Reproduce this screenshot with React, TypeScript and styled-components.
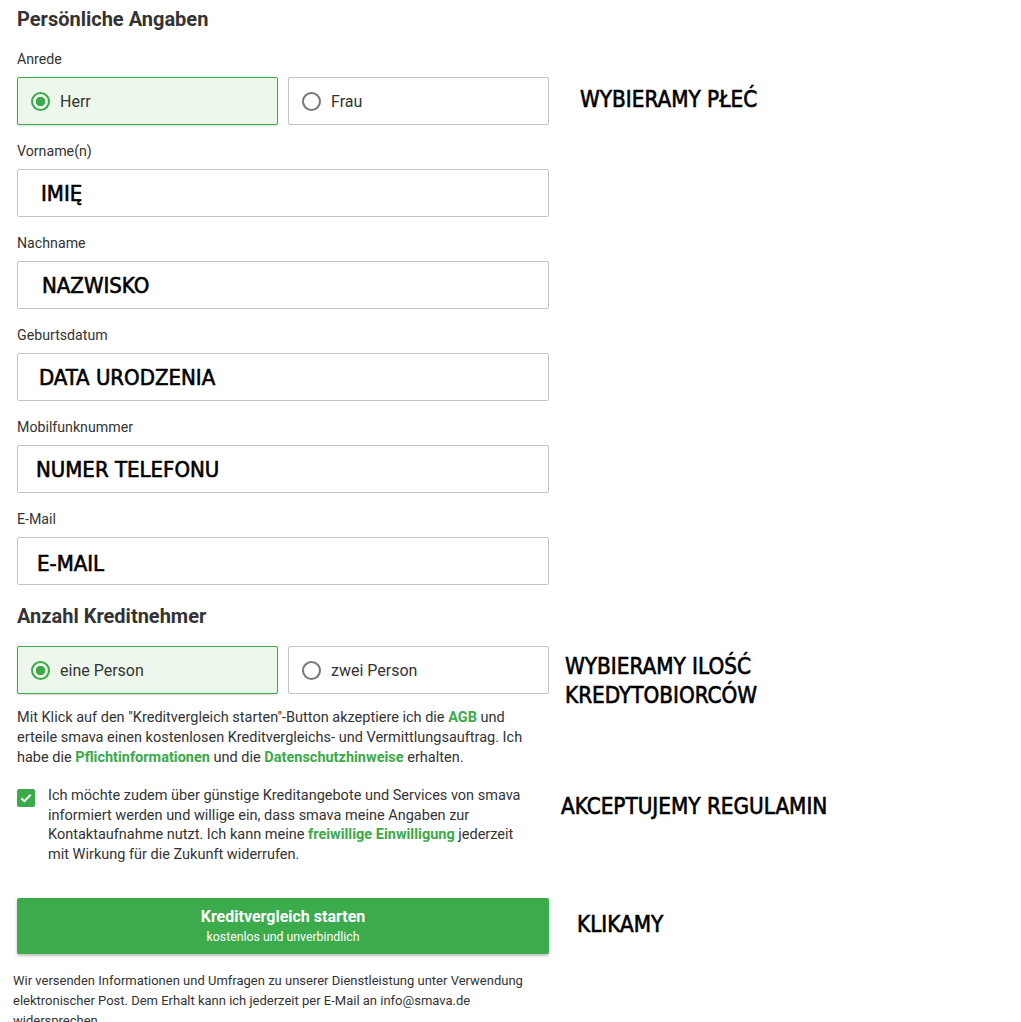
import React from "react";
import styled, { createGlobalStyle } from "styled-components";

const GlobalStyle = createGlobalStyle`
  body {
    margin: 0;
    background: #ffffff;
    font-family: Roboto, "Liberation Sans", Arial, sans-serif;
    color: #333333;
  }
`;

const App = () => {
  return (
    <Page>
      <GlobalStyle />
      <Title>Persönliche Angaben</Title>

      <Label>Anrede</Label>
      <Row>
        <Choices>
          <Choice $on>
            <Dot $on />
            Herr
          </Choice>
          <Choice>
            <Dot />
            Frau
          </Choice>
        </Choices>
        <Note $left={31} $top={8}>WYBIERAMY PŁEĆ</Note>
      </Row>

      <Label>Vorname(n)</Label>
      <Field $pad={23}>IMIĘ</Field>

      <Label>Nachname</Label>
      <Field $pad={24}>NAZWISKO</Field>

      <Label>Geburtsdatum</Label>
      <Field $pad={21}>DATA URODZENIA</Field>

      <Label>Mobilfunknummer</Label>
      <Field $pad={18}>NUMER TELEFONU</Field>

      <Label>E-Mail</Label>
      <Field $pad={19} $drop={5}>E-MAIL</Field>

      <SubTitle>Anzahl Kreditnehmer</SubTitle>
      <Row>
        <Choices>
          <Choice $on>
            <Dot $on />
            eine Person
          </Choice>
          <Choice>
            <Dot />
            zwei Person
          </Choice>
        </Choices>
        <Note $left={16} $top={6}>
          WYBIERAMY ILOŚĆ
          <br />
          KREDYTOBIORCÓW
        </Note>
      </Row>

      <Text>
        Mit Klick auf den "Kreditvergleich starten"-Button akzeptiere ich die <Link>AGB</Link> und
        erteile smava einen kostenlosen Kreditvergleichs- und Vermittlungsauftrag. Ich habe die{" "}
        <Link>Pflichtinformationen</Link> und die <Link>Datenschutzhinweise</Link> erhalten.
      </Text>

      <Row $top={18}>
        <Consent>
          <Box>
            <svg width="12" height="10" viewBox="0 0 12 10">
              <path d="M1.2 5.2 L4.4 8.2 L10.8 1.6" fill="none" stroke="#fff" strokeWidth="2" />
            </svg>
          </Box>
          <ConsentText>
            Ich möchte zudem über günstige Kreditangebote und Services von smava informiert werden
            und willige ein, dass smava meine Angaben zur Kontaktaufnahme nutzt. Ich kann meine{" "}
            <Link>freiwillige Einwilligung</Link> jederzeit mit Wirkung für die Zukunft widerrufen.
          </ConsentText>
        </Consent>
        <Note $left={12} $top={6}>AKCEPTUJEMY REGULAMIN</Note>
      </Row>

      <Row $top={33}>
        <Submit>
          <strong>Kreditvergleich starten</strong>
          <span>kostenlos und unverbindlich</span>
        </Submit>
        <Note $left={28} $top={12}>KLIKAMY</Note>
      </Row>

      <Footer>
        Wir versenden Informationen und Umfragen zu unserer Dienstleistung unter Verwendung
        elektronischer Post. Dem Erhalt kann ich jederzeit per E-Mail an info@smava.de
        widersprechen.
      </Footer>
    </Page>
  );
};

export default App;

const green = "#3aaa4a";

const Page = styled.div`
  width: 1021px;
  height: 1022px;
  overflow: hidden;
  box-sizing: border-box;
  padding: 7px 0 0 17px;
`;

const Title = styled.h2`
  margin: 0;
  font-size: 20px;
  line-height: 24px;
  font-weight: 700;
  color: #333;
`;

const SubTitle = styled(Title)`
  margin-top: 19px;
  margin-bottom: 18px;
`;

const Label = styled.div`
  margin-top: 16px;
  margin-bottom: 8px;
  font-size: 14.2px;
  line-height: 20px;
  color: #333;
  &:nth-of-type(1) {
    margin-top: 18px;
  }
`;

const Row = styled.div<{ $top?: number }>`
  display: grid;
  grid-template-columns: 532px 1fr;
  align-items: start;
  margin-top: ${(p) => p.$top || 0}px;
`;

const Choices = styled.div`
  display: grid;
  grid-template-columns: 261px 261px;
  column-gap: 10px;
`;

const Choice = styled.div<{ $on?: boolean }>`
  box-sizing: border-box;
  height: 48px;
  display: flex;
  align-items: center;
  gap: 10px;
  padding-left: 13px;
  font-size: 16px;
  color: #333;
  border: 1px solid ${(p) => (p.$on ? green : "#c4c4c4")};
  background: ${(p) => (p.$on ? "#eef7ec" : "#fff")};
  border-radius: 2px;
  box-shadow: ${(p) => (p.$on ? "0 1px 2px rgba(0,0,0,0.15)" : "none")};
`;

const Dot = styled.span<{ $on?: boolean }>`
  box-sizing: border-box;
  width: 19px;
  height: 19px;
  border-radius: 50%;
  border: 2px solid ${(p) => (p.$on ? green : "#777")};
  background: ${(p) => (p.$on ? `radial-gradient(circle, ${green} 0 4.5px, transparent 5px)` : "#fff")};
`;

const Field = styled.div<{ $pad: number; $drop?: number }>`
  box-sizing: border-box;
  width: 532px;
  height: 48px;
  border: 1px solid #c4c4c4;
  border-radius: 2px;
  display: flex;
  align-items: center;
  padding-left: ${(p) => p.$pad}px;
  padding-top: ${(p) => p.$drop || 0}px;
  font-family: "DejaVu Sans Condensed", "DejaVu Sans", sans-serif;
  font-weight: 400;
  font-size: 22px;
  -webkit-text-stroke: 0.6px #000;
  color: #000;
`;

/* annotation text laid over the screenshot; height 0 so it never grows the row */
const Note = styled.div<{ $left: number; $top?: number }>`
  height: 0;
  overflow: visible;
  padding-left: ${(p) => p.$left}px;
  margin-top: ${(p) => p.$top ?? 11}px;
  font-family: "DejaVu Sans Condensed", "DejaVu Sans", sans-serif;
  font-weight: 400;
  font-size: 22.3px;
  line-height: 29px;
  -webkit-text-stroke: 0.6px #000;
  color: #000;
  white-space: nowrap;
`;

const Text = styled.p`
  width: 515px;
  margin: 14px 0 0;
  font-size: 14.5px;
  line-height: 20px;
  color: #333;
`;

const Link = styled.a`
  color: ${green};
  font-weight: 700;
`;

const Consent = styled.div`
  display: flex;
  gap: 13px;
`;

const Box = styled.span`
  flex: none;
  width: 18px;
  height: 18px;
  margin-top: 3px;
  border-radius: 2px;
  background: ${green};
  display: flex;
  align-items: center;
  justify-content: center;
`;

const ConsentText = styled.p`
  margin: 0;
  width: 482px;
  font-size: 14.5px;
  line-height: 19.7px;
  color: #333;
`;

const Submit = styled.button`
  width: 532px;
  height: 56px;
  border: none;
  border-radius: 2px;
  background: #3bab4b;
  color: #fff;
  font-family: Roboto, sans-serif;
  display: flex;
  flex-direction: column;
  align-items: center;
  justify-content: center;
  gap: 4px;
  box-shadow: 0 2px 3px rgba(0, 0, 0, 0.25);
  strong {
    font-size: 16px;
    line-height: 19px;
  }
  span {
    font-size: 12.3px;
    line-height: 15px;
  }
`;

const Footer = styled.p`
  margin: 17px 0 0 -4px;
  width: 515px;
  font-size: 13px;
  line-height: 20px;
  color: #333;
`;
